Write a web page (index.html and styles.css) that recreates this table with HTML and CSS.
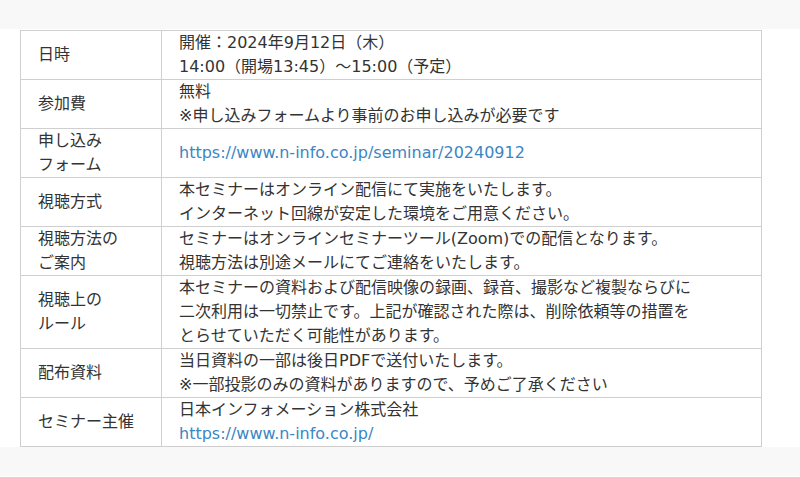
FILE: index.html
```html
<!DOCTYPE html>
<html lang="ja">
<head>
  <meta charset="UTF-8" />
  <meta name="viewport" content="width=device-width, initial-scale=1" />
  <title>セミナー概要</title>
  <link rel="stylesheet" href="styles.css">
</head>
<body>

<div class="band"></div>

<section class="outline">
  <table class="info">
    <colgroup>
      <col class="col-label">
      <col>
    </colgroup>
    <tr>
      <th>日時</th>
      <td>開催：2024年9月12日（木）<br>14:00（開場13:45）～15:00（予定）</td>
    </tr>
    <tr>
      <th>参加費</th>
      <td>無料<br>※申し込みフォームより事前のお申し込みが必要です</td>
    </tr>
    <tr>
      <th>申し込み<br>フォーム</th>
      <td><a href="#">https://www.n-info.co.jp/seminar/20240912</a></td>
    </tr>
    <tr>
      <th>視聴方式</th>
      <td>本セミナーはオンライン配信にて実施をいたします。<br>インターネット回線が安定した環境をご用意ください。</td>
    </tr>
    <tr>
      <th>視聴方法の<br>ご案内</th>
      <td>セミナーはオンラインセミナーツール(Zoom)での配信となります。<br>視聴方法は別途メールにてご連絡をいたします。</td>
    </tr>
    <tr>
      <th>視聴上の<br>ルール</th>
      <td>本セミナーの資料および配信映像の録画、録音、撮影など複製ならびに<br>二次利用は一切禁止です。上記が確認された際は、削除依頼等の措置を<br>とらせていただく可能性があります。</td>
    </tr>
    <tr>
      <th>配布資料</th>
      <td>当日資料の一部は後日PDFで送付いたします。<br>※一部投影のみの資料がありますので、予めご了承ください</td>
    </tr>
    <tr>
      <th>セミナー主催</th>
      <td>日本インフォメーション株式会社<br><a href="#">https://www.n-info.co.jp/</a></td>
    </tr>
  </table>
</section>

<div class="band"></div>

</body>
</html>
```

FILE: styles.css
```css
body {
  font-family: "DejaVu Sans", "Noto Sans CJK JP", sans-serif;
  font-size: 16px;
  line-height: 24px;
  color: #333;
  background: #fff;
  margin: 0;
}

.band {
  height: 29px;
  background: #f8f8f8;
}

.outline {
  padding: 1px 0 0 20px;
}

.info {
  width: 742px;
  border-collapse: collapse;
  table-layout: fixed;
}

.col-label {
  width: 141px;
}

.info th,
.info td {
  border: 1px solid #cfcfcf;
  padding: 0 16px 0 17px;
  vertical-align: middle;
  text-align: left;
  font-weight: normal;
}

.info a {
  color: #3b86c4;
  text-decoration: none;
}
```
